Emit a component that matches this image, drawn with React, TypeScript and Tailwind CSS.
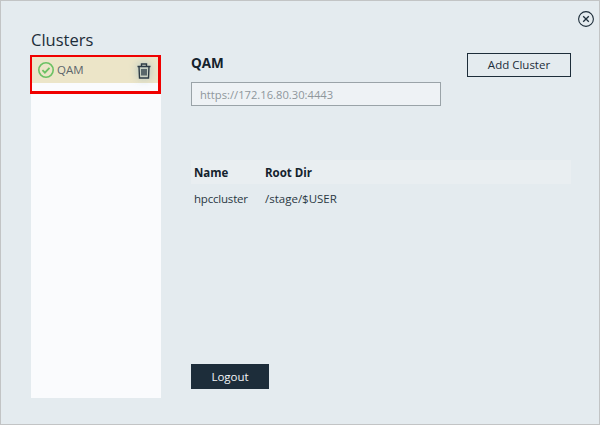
import React from "react";

export default function App() {
  return (
    <div className="relative w-[600px] h-[425px] flex border border-[#c2c4c5] bg-[#e4ebef] text-[#1d2d3a] font-['Open_Sans',sans-serif] pl-[30px] pt-[29px] pb-[26px] pr-[28px]">
      <button className="absolute top-[10px] right-[5px] w-[16px] h-[16px] text-[#1d2d3a]">
        <svg viewBox="0 0 16 16" width="16" height="16" fill="none" stroke="currentColor" strokeWidth="1.1">
          <circle cx="8" cy="8" r="7.4" />
          <path d="M5.2 5.2l5.6 5.6M10.8 5.2l-5.6 5.6" strokeWidth="1.3" />
        </svg>
      </button>

      <div className="w-[130px] flex flex-col shrink-0">
        <h1 className="text-[16.5px] leading-[20px] h-[25px] text-[#1d2d3a]">Clusters</h1>
        <div className="flex-1 bg-[#fafbfd] flex flex-col">
          <div className="-ml-[1px] h-[39px] border-2 border-r-[3px] border-b-[3px] border-[#f00000] bg-[#fafbfd]">
            <div className="h-[26px] bg-[#ece5c8] flex items-center pl-[6px] pr-[7px]">
              <svg viewBox="0 0 16 16" width="16" height="16" fill="none" stroke="#6cc164" strokeWidth="1.6">
                <circle cx="8" cy="8" r="7.2" />
                <path d="M4.4 8.2l2.5 2.5 4.6-4.9" strokeWidth="1.8" />
              </svg>
              <span className="ml-[3px] -mt-[1px] text-[11.5px] text-[#5d666c]">QAM</span>
              <svg viewBox="0 0 14 16" width="14" height="16" fill="none" stroke="#2d3b45" strokeWidth="1.4" className="ml-auto mt-[1px] drop-shadow-[0_0_4px_rgba(110,160,185,0.8)]">
                <path d="M.5 3.5h13M4.5 3.5V1h5v2.5M2 3.5l.5 11.5h9l.5-11.5M5 6v6.5M7 6v6.5M9 6v6.5" />
              </svg>
            </div>
          </div>
        </div>
      </div>

      <div className="flex-1 ml-[30px] mt-[23px] mb-[9px] flex flex-col">
        <div className="flex justify-between">
          <div className="flex flex-col">
            <h2 className="mt-[1px] text-[13.5px] leading-[18px] font-bold text-[#14222d]">QAM</h2>
            <input
              readOnly
              value=""
              placeholder="https://172.16.80.30:4443"
              className="mt-[10px] w-[250px] h-[24px] px-[8px] border border-[#9aa3a8] bg-[#eef2f5] text-[11.2px] placeholder:text-[#8f979c] outline-none"
            />
          </div>
          <button className="w-[104px] h-[24px] border border-[#1d2d3a] text-[11.5px] text-[#1d2d3a]">Add Cluster</button>
        </div>

        <div className="mt-[54px]">
          <div className="flex items-center h-[24px] pt-[1px] bg-[#e9eef1] text-[11.5px] font-bold text-[#14222d]">
            <span className="w-[74px] pl-[3px]">Name</span>
            <span>Root Dir</span>
          </div>
          <div className="flex items-center h-[28px] pt-[1px] text-[11.5px] text-[#2a3843]">
            <span className="w-[74px] pl-[3px] tracking-[-0.2px]">hpccluster</span>
            <span>/stage/$USER</span>
          </div>
        </div>

        <button className="mt-auto w-[78px] h-[25px] bg-[#1d2d3a] text-[#f3f6f8] text-[11.5px]">Logout</button>
      </div>
    </div>
  );
}
